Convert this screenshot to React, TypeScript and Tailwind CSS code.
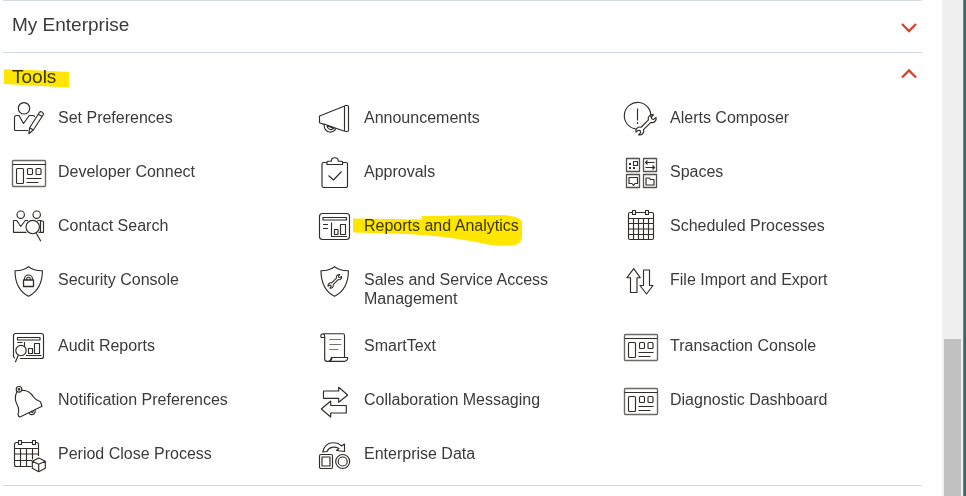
import React from "react";

const Dashboard = () => (
  <>
    <rect x="0.5" y="6.5" width="33" height="26" rx="1" stroke="#6b6866" strokeWidth="1.4" />
    <path d="M0.5 10.5h33" />
    <rect x="4.5" y="14.5" width="7" height="15" rx="1" />
    <rect x="15.5" y="14.5" width="5" height="6" rx="1" />
    <rect x="24" y="14.5" width="5" height="6" rx="1" />
    <path d="M14.5 24.5h15M14.5 28.5h12" />
  </>
);

const Wrench = () => (
  <path
    transform="rotate(-45)"
    d="M-6-2H6A4.700 4.700 0 0 1 14.300-2.200L10.800-1.900 9.600 0 10.800 1.900 14.300 2.200A4.700 4.700 0 0 1 6 2H-6A4.700 4.700 0 0 1-14.300 2.200L-10.800 1.900-9.600 0-10.800-1.900-14.300-2.200A4.700 4.700 0 0 1-6-2z"
  />
);

const Shield = () => (
  <path d="M16.5 4.7C13 7.4 8 8.8 3 8.7c0 12 4 20.6 13.500 25.600C26.200 29.300 30.400 20.700 30.400 8.700c-5 .1-10.400-1.300-13.900-4z" />
);

const icons: Record<string, React.ReactNode> = {
  preferences: (
    <>
      <circle cx="12" cy="8.300" r="5.700" />
      <path d="M16 30.500H3.500a1 1 0 0 1-1-1V17.500a2 2 0 0 1 2-2H7l4.500 8 5.800-8h3.700q1.500 0 1.500 1.500" />
      <path d="M17.700 27.700 27.500 12.200q2-1.800 4.200 1.800L21.300 30l-4.500 3.700zM17.700 27.700l3.600 2.300M26.200 14.300l4 2.200" />
    </>
  ),
  megaphone: (
    <>
      <path d="M26.700 6 1.500 16v6.700l4.700 1.700M18 28.300l8.700 3" />
      <rect x="26.500" y="5.500" width="4" height="26" rx="1.200" />
      <path d="M6 24c0 4 2 7.500 5.500 8 3 .4 5.300-1 6.500-3.700M6 24l12 4.300M9 26l7 2.300c-3 2.500-6.500 1-7-2.300z" />
    </>
  ),
  alert: (
    <>
      <path d="M12.500 29a13.300 13.300 0 1 1 14.300-11.500" />
      <path d="M13.500 8.500v12M13.500 22v2" />
      <g transform="translate(22 24.800) scale(.86)" strokeWidth="1.350">
        <Wrench />
      </g>
    </>
  ),
  dashboard: <Dashboard />,
  clipboard: (
    <>
      <path d="M9 8.500H5.500a1.500 1.500 0 0 0-1.500 1.500v22a1.500 1.500 0 0 0 1.500 1.500h22.500a1.500 1.500 0 0 0 1.500-1.500V10a1.500 1.500 0 0 0-1.500-1.500h-3.500" />
      <path d="M9 10.500V8q0-.8 1-.8h3.300q0-3.500 3.500-3.500t3.500 3.500h3.300q1 0 1 .8v2.500z" />
      <path d="m10.500 21.500 5 4.500 8-8.500" />
    </>
  ),
  spaces: (
    <>
      <path d="M2.500 4.500h13v13h-13zM19.500 4.500h13v13h-13zM2.500 20.500h13v13h-13zM19.500 20.500h13v13h-13z" stroke="#55514e" strokeWidth="1.300" />
      <path d="M9.500 7.500h4v4h-4z" />
      <path d="M5 9h2v2H5zM5 13h2v2H5zM9 13h2v2H9z" fill="#312d2a" stroke="none" />
      <path d="M30.500 8.500h-9l2-2m-2 2 2 2M21.500 13.500h9l-2-2m2 2-2 2" />
      <path d="M5 23.500h8.500v6H11l-1.500 2-1.500-2H5zM22 24h3.500l1 1.500H30v5.500h-8z" />
    </>
  ),
  contacts: (
    <>
      <circle cx="8.700" cy="6.700" r="3.700" />
      <circle cx="24.700" cy="6.700" r="3.700" />
      <path d="M14.500 24.300H1.500V12.500h3.200l4 6 4.600-6H16M25.500 12.500h3l3 1v10.800h-5M28.500 13v11" />
      <circle cx="20.700" cy="19" r="6.700" />
      <path d="m24.300 25.300 4.500 8" />
    </>
  ),
  report: (
    <>
      <rect x="1.500" y="5.500" width="30" height="26" rx="3" />
      <rect x="5" y="9.500" width="23.500" height="2.500" />
      <path d="M5 16.500h5M5 20.500h5M13.500 14.500v14h15.500" />
      <path d="M16.500 21.500h3.500v5h-3.500zM22.500 16.500h5v10h-5z" />
    </>
  ),
  calendar: (
    <>
      <rect x="4.500" y="4.500" width="25" height="27" rx="1.500" />
      <path d="M4.500 10.500h25M4.500 15.500h25M4.500 21h25M4.500 26.500h25M9.500 10.500v21M14.500 10.500v21M19.500 10.500v21M24.500 10.500v21" />
      <path d="M8.500 2.500h3v4h-3zM21.500 2.500h3v4h-3z" fill="#fff" />
    </>
  ),
  lock: (
    <>
      <Shield />
      <rect x="11.500" y="18" width="10" height="6.500" strokeWidth="1.300" />
      <path d="M12.500 18v-1a4 4 0 0 1 8 0v1M14.700 18v-1a1.800 1.800 0 0 1 3.600 0v1" />
    </>
  ),
  access: (
    <>
      <Shield />
      <g transform="translate(16.800 19.300) scale(.58)" strokeWidth="1.800">
        <Wrench />
      </g>
    </>
  ),
  transfer: (
    <path d="m9.700 6.700 6.500 9H13v14.800H6.500V15.700H3zM19.500 8h6v15.500h3.500L22.500 32 16 23.500h3.500z" />
  ),
  audit: (
    <>
      <path d="M3 30.300q-1.500-.5-1.500-2V7.500a2 2 0 0 1 2-2h26a2 2 0 0 1 2 2v21a2 2 0 0 1-2 2H8" />
      <rect x="5.500" y="9.500" width="22.500" height="2.500" />
      <path d="M5.300 14.500h5.200M12.500 14v5M14 27.500h15.500" />
      <path d="M16.500 20.500h4v5h-4zM22.500 15.500h5v10h-5z" />
      <circle cx="9" cy="22.500" r="5.200" />
      <path d="m6.300 27.300-3 7" />
    </>
  ),
  scroll: (
    <>
      <path d="M6.500 9.500H3q-.8-3.800 2.500-3.800h19.500q1.500 0 1.500 1.500v22M5.500 5.700q1.200 1 1.200 3V31q0 2.300 2.500 2.300h17.300q3 0 3.200-3.800H14q-.5 3.800-3.500 3.800 2.500-.8 2.800-3.800h1" />
      <path d="M11.300 11.500h12M11.300 16.500h12M11.300 21.500h9" stroke="#777471" />
    </>
  ),
  bell: (
    <>
      <circle cx="7" cy="7.300" r="2.800" />
      <circle cx="7" cy="7.300" r=".8" />
      <path d="M9.300 8.500c6-.5 9 1.500 12.200 6.500 2 3 4.500 4 7 4.800q1 2.700 1.500 4.500L8 35q-1.500-.3-2-2.500c1.500-4 .8-7-1.200-10.500-2-4-2-8 .2-12.500" />
      <path d="M17 31c1.500 2.800 6.300 2 6.300-2.800M19.200 30c.8 1 1.800.7 2-.8" />
    </>
  ),
  exchange: (
    <path d="M5.500 9h15.200V5.300l9 7.700-9 7.300v-4H5.500zM28.300 23.500H12.700V19l-9.400 8 9.400 8v-4h15.600z" />
  ),
  period: (
    <>
      <path d="M19.500 30.500h-15a2 2 0 0 1-2-2v-20a2 2 0 0 1 2-2h20a2 2 0 0 1 2 2V20" />
      <path d="M2.500 12.500h24M2.500 18h24M2.500 24.500H20M8.500 12.500v18M14.500 12.500v18M20.500 12.500v11" />
      <path d="M6.500 4.500h3v4h-3zM20.500 4.500h3v4h-3z" fill="#fff" />
      <path d="m26.700 22 6.600 3.300v7l-6.600 3.400-6.400-3.400v-7zM20.300 25.300l6.400 3 6.600-3M26.700 28.300v7.400" fill="#fff" />
    </>
  ),
  data: (
    <>
      <rect x="1.500" y="18.500" width="13" height="14" rx="1.500" />
      <rect x="4" y="21" width="8" height="9" />
      <circle cx="24.700" cy="25.500" r="7" />
      <circle cx="24.700" cy="25.500" r="4.500" />
      <path d="M4.700 16C6 10 10 6.700 15.300 6.700c3.500 0 6 .8 8.200 3.300L26.500 8v7.500l-8-1 2.500-2c-5-2.500-10-1.500-12 3z" />
    </>
  ),
};

const tools: { label: string; icon: string; marked?: boolean }[] = [
  { label: "Set Preferences", icon: "preferences" },
  { label: "Announcements", icon: "megaphone" },
  { label: "Alerts Composer", icon: "alert" },
  { label: "Developer Connect", icon: "dashboard" },
  { label: "Approvals", icon: "clipboard" },
  { label: "Spaces", icon: "spaces" },
  { label: "Contact Search", icon: "contacts" },
  { label: "Reports and Analytics", icon: "report", marked: true },
  { label: "Scheduled Processes", icon: "calendar" },
  { label: "Security Console", icon: "lock" },
  { label: "Sales and Service Access Management", icon: "access" },
  { label: "File Import and Export", icon: "transfer" },
  { label: "Audit Reports", icon: "audit" },
  { label: "SmartText", icon: "scroll" },
  { label: "Transaction Console", icon: "dashboard" },
  { label: "Notification Preferences", icon: "bell" },
  { label: "Collaboration Messaging", icon: "exchange" },
  { label: "Diagnostic Dashboard", icon: "dashboard" },
  { label: "Period Close Process", icon: "period" },
  { label: "Enterprise Data", icon: "data" },
];

function SectionHeader({ title, open, marked }: { title: string; open: boolean; marked?: boolean }) {
  return (
    <h2>
      <button
        type="button"
        aria-expanded={open}
        className="flex h-[47px] w-full items-center justify-between pl-[9px] pr-[5px] text-left text-[19px] leading-6 text-[#3b3b3b]"
      >
        <span className="relative">
          {title}
          {marked && (
            <svg
              aria-hidden="true"
              className="pointer-events-none absolute -left-2 top-1 h-5 w-[66px] mix-blend-multiply"
              viewBox="0 0 66 20"
            >
              <path d="M0 .3 30 1.300 65 3v15.500L0 15z" fill="#ffe600" />
            </svg>
          )}
        </span>
        <svg aria-hidden="true" width="16" height="18" viewBox="0 0 16 18" fill="none" stroke="#d4442e" strokeWidth="2.300">
          <path d={open ? "M1 9.500 8 2.500l7 7" : "m1 8 7 7 7-7"} />
        </svg>
      </button>
    </h2>
  );
}

function ToolLink({ label, icon, marked }: { label: string; icon: string; marked?: boolean }) {
  return (
    <a href="#" className="flex items-start gap-3 pl-[9px] text-base leading-[19px] text-[#3b3b3b]">
      <svg
        aria-hidden="true"
        className="h-[34px] w-[34px] shrink-0 overflow-visible"
        viewBox="0 0 34 34"
        fill="none"
        stroke="#312d2a"
        strokeWidth="1.150"
        strokeLinejoin="round"
      >
        {icons[icon]}
      </svg>
      <span className="relative pt-2">
        {label}
        {marked && (
          <svg
            aria-hidden="true"
            className="pointer-events-none absolute -left-3 top-1.5 h-8 w-[172px] mix-blend-multiply"
            viewBox="0 0 172 32"
          >
            <path d="M1 4.500 70 5.500V2L149 1c12 0 20 3 21 7v14c0 6-4 9-10 9.500-8 .5-16 .5-24-1C111 25 85 21.500 55 20L1 18.500z" fill="#ffe600" />
          </svg>
        )}
      </span>
    </a>
  );
}

export default function App() {
  return (
    <div className="flex min-h-screen bg-white font-['Liberation_Sans',Arial,sans-serif]">
      <main className="min-w-0 flex-1 pl-[3px] pr-5">
        <section className="border-t border-[#d3dae3] pb-1">
          <SectionHeader title="My Enterprise" open={false} />
        </section>
        <section className="border-y border-[#d3dae3] pb-[15px]">
          <SectionHeader title="Tools" open marked />
          <nav aria-label="Tools" className="mr-px grid grid-cols-3 gap-y-5">
            {tools.map((tool) => (
              <ToolLink key={tool.label} {...tool} />
            ))}
          </nav>
        </section>
      </main>
      <div aria-hidden="true" className="flex w-[21px] flex-col bg-[#f0f0f0] px-0.5">
        <div className="flex-[339]" />
        <div className="flex-[157] bg-[#c1c1c1]" />
      </div>
      <div aria-hidden="true" className="w-[3px] border-l border-[#71878c] bg-[#356873]" />
    </div>
  );
}
